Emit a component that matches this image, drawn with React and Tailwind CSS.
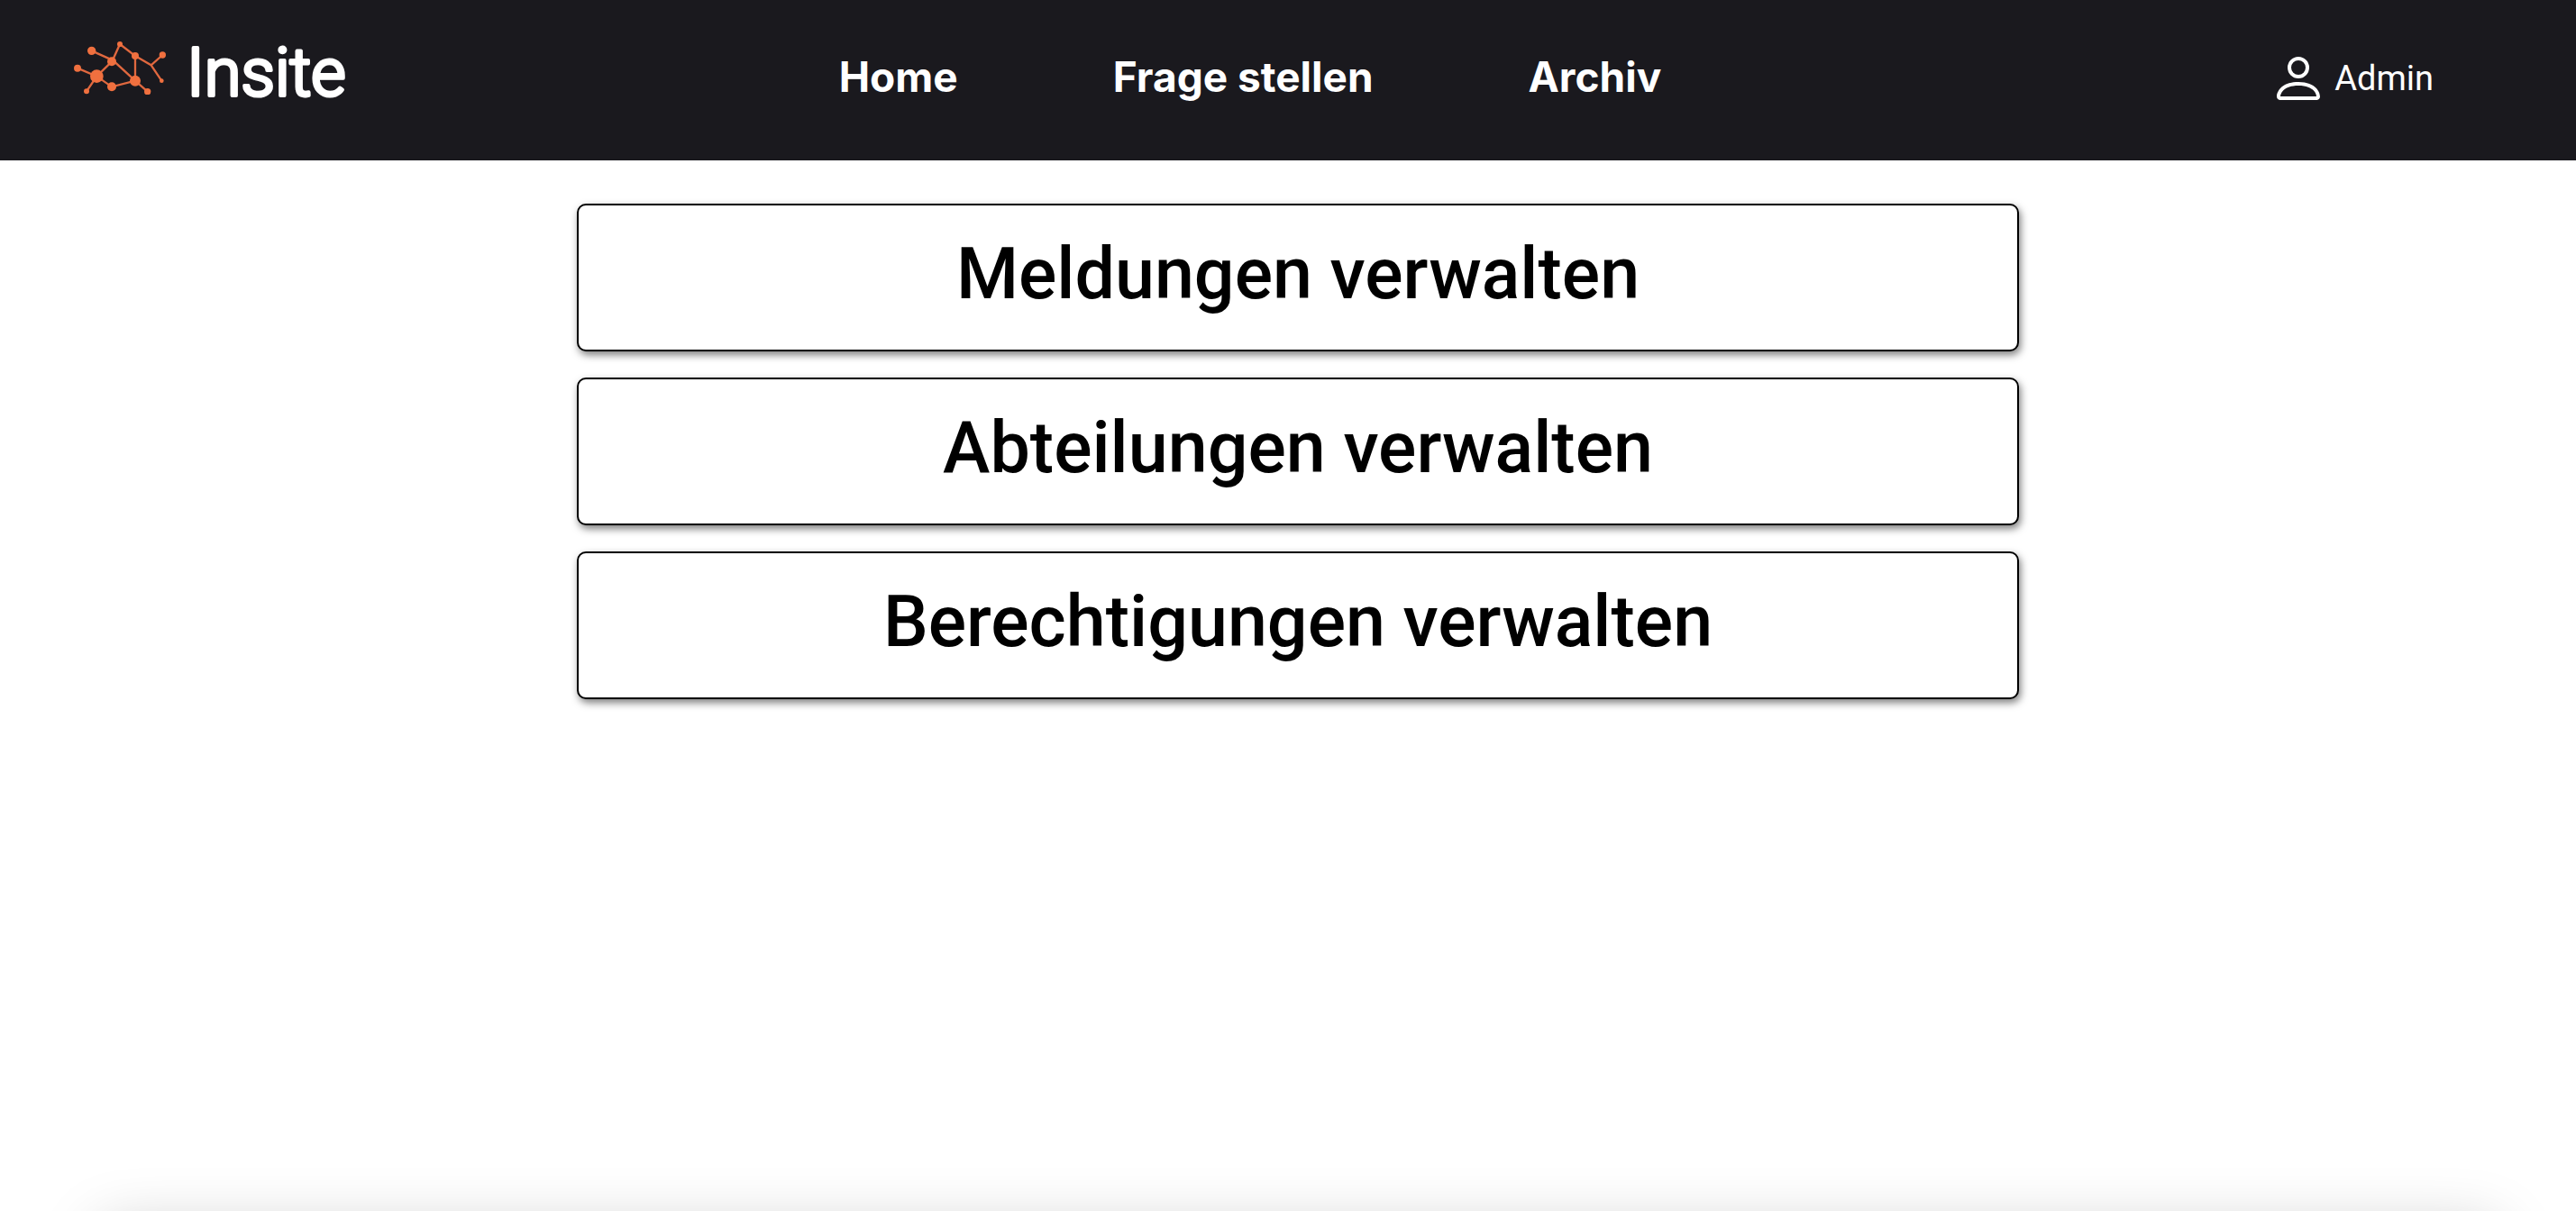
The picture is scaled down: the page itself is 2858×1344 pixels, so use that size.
import React from "react";
import { BsPerson } from "react-icons/bs";

const navItems = ["Home", "Frage stellen", "Archiv"];
const actions = ["Meldungen verwalten", "Abteilungen verwalten", "Berechtigungen verwalten"];

const nodes = [
  [95, 64, 14],
  [48, 122, 12],
  [112, 149, 22],
  [162, 100, 15],
  [189, 42, 9],
  [240, 81, 12],
  [331, 78, 11],
  [328, 164, 7],
  [240, 164, 18],
  [162, 184, 15],
  [78, 199, 9],
  [281, 200, 11],
];

function Logo() {
  return (
    <svg className="h-[154px] w-[306px]" role="img" aria-label="Insite">
      <svg x="0" y="38" width="103" height="59" viewBox="36 33 309 177">
        <path
          d="M95 64 L162 94 M162 100 L112 149 M48 122 L112 149 L78 199 M112 149 L162 184 L240 164 M189 42 L165 95 L240 164 L281 200 M189 42 L240 81 V164 M240 81 L293 112 L331 78 M293 112 L328 164"
          fill="none"
          stroke="#e0683f"
          strokeWidth="7"
        />
        {nodes.map(([x, y, r]) => (
          <circle key={`${x}-${y}`} cx={x} cy={y} r={r} fill="#f0703f" />
        ))}
      </svg>
      <text
        x="125"
        y="98"
        fill="white"
        stroke="white"
        strokeWidth="4"
        strokeLinejoin="round"
        className="font-['Roboto',sans-serif] text-[74px] font-light"
      >
        Insite
      </text>
    </svg>
  );
}

export default function App() {
  return (
    <div className="relative flex h-screen flex-col overflow-hidden bg-white font-['Inter',sans-serif]">
      <header className="grid shrink-0 grid-cols-[1fr_auto_1fr] items-center bg-[#1a191e] pt-2 pr-[158px] pb-4 pl-[82px] text-white">
        <a href="#home">
          <Logo />
        </a>
        <nav className="flex gap-[172px] pr-2 text-[46px] font-bold">
          {navItems.map((item) => (
            <a key={item} href="#nav">
              {item}
            </a>
          ))}
        </nav>
        <button
          type="button"
          className="flex items-center gap-2 justify-self-end pt-1 font-['Roboto',sans-serif] text-[38px]"
        >
          <BsPerson className="size-16" />
          Admin
        </button>
      </header>
      <main className="flex flex-col items-center gap-[29px] pt-12 pl-[22px]">
        {actions.map((label) => (
          <button
            key={label}
            type="button"
            className="w-[56vw] rounded-[10px] border-2 border-black bg-white pt-[22px] pb-[30px] font-['Roboto',sans-serif] text-[79px] leading-[108px] font-medium text-black shadow-[2px_4px_8px_rgba(0,0,0,0.5)]"
          >
            {label}
          </button>
        ))}
      </main>
      <div className="absolute top-full right-[88px] left-[112px] mt-5 h-40 shadow-[0_0_68px_rgba(0,0,0,0.22)]" />
    </div>
  );
}
